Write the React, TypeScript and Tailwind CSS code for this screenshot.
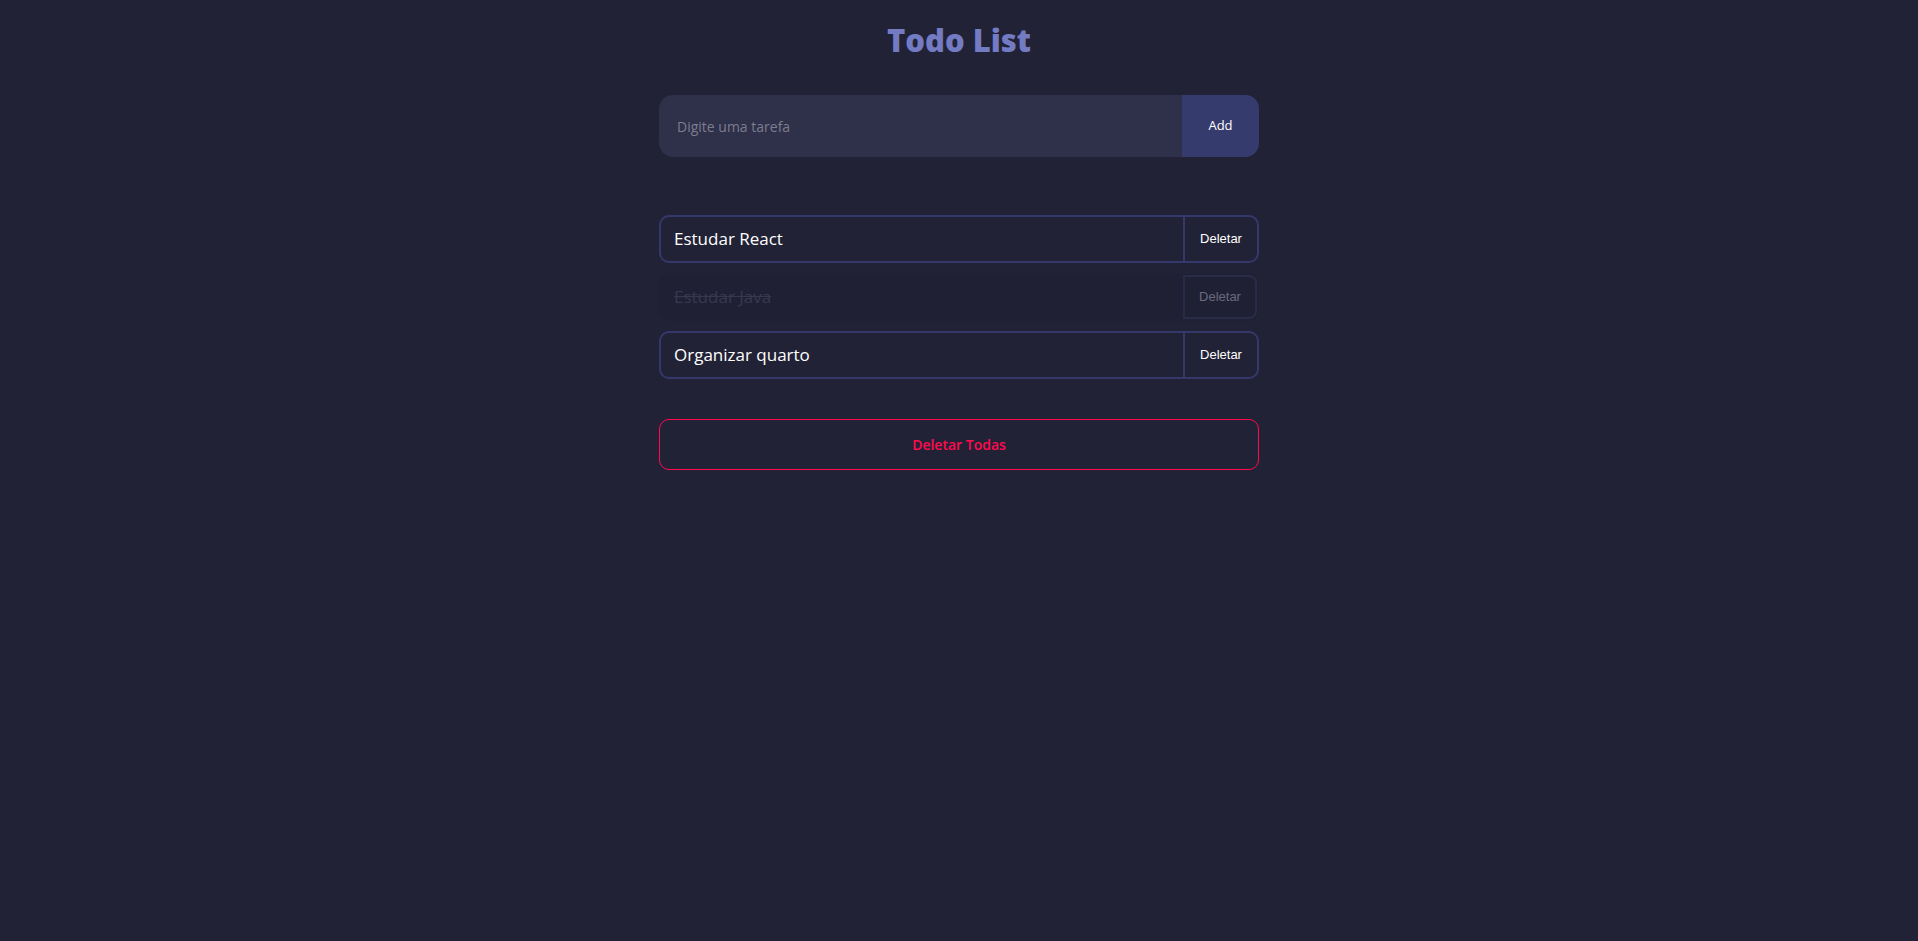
import { useState } from "react";

type Todo = { id: number; text: string; done: boolean };

const initial: Todo[] = [
  { id: 1, text: "Estudar React", done: false },
  { id: 2, text: "Estudar Java", done: true },
  { id: 3, text: "Organizar quarto", done: false },
];

const App = () => {
  const [todos, setTodos] = useState<Todo[]>(initial);
  const [text, setText] = useState("");

  const addTodo = () => {
    if (!text.trim()) return;
    setTodos([...todos, { id: Date.now(), text, done: false }]);
    setText("");
  };

  return (
    <div className="min-h-screen w-full bg-[#222236] font-['Open_Sans',sans-serif]">
      <div className="mx-auto flex w-[600px] flex-col pt-4">
        <h1 className="text-center text-[31px] font-extrabold leading-[48px] text-[#737bc2]">
          Todo List
        </h1>

        {/* input */}
        <div className="mt-[31px] flex h-[62px] overflow-hidden rounded-[14px] bg-[#2f3049]">
          <input
            value={text}
            onChange={(e) => setText(e.target.value)}
            placeholder="Digite uma tarefa"
            className="flex-1 bg-transparent px-[18px] text-[14px] text-white outline-none placeholder:text-[#7c7d8f]"
          />
          <button
            onClick={addTodo}
            className="w-[77px] bg-[#363b6d] text-[13px] font-medium text-white"
          >
            Add
          </button>
        </div>

        {/* list */}
        <ul className="mt-[58px] flex flex-col gap-[10px]">
          {todos.map((t) => (
            <li
              key={t.id}
              className={
                t.done
                  ? "flex h-[48px] rounded-[10px] border-2 border-transparent bg-[#1f1f33] opacity-60"
                  : "flex h-[48px] rounded-[10px] border-2 border-[#34386a] bg-[#222236]"
              }
            >
              <span
                onClick={() =>
                  setTodos(todos.map((x) => (x.id === t.id ? { ...x, done: !x.done } : x)))
                }
                className={
                  t.done
                    ? "flex flex-1 cursor-pointer items-center px-[13px] text-[17px] text-[#45475f] line-through"
                    : "flex flex-1 cursor-pointer items-center px-[13px] text-[17px] text-white"
                }
              >
                {t.text}
              </span>
              <button
                onClick={() => setTodos(todos.filter((x) => x.id !== t.id))}
                className={
                  t.done
                    ? "w-[74px] rounded-r-[8px] border-2 border-[#2e3156] font-['Liberation_Sans',sans-serif] text-[13px] text-[#9a9bab]"
                    : "w-[74px] border-l-2 border-[#34386a] font-['Liberation_Sans',sans-serif] text-[13px] text-white"
                }
              >
                Deletar
              </button>
            </li>
          ))}
        </ul>

        <button
          onClick={() => setTodos([])}
          className="mt-[40px] h-[51px] rounded-[10px] border border-[#ff0a4e] text-[14px] font-semibold text-[#ff0a4e]"
        >
          Deletar Todas
        </button>
      </div>
    </div>
  );
};

export default App;
